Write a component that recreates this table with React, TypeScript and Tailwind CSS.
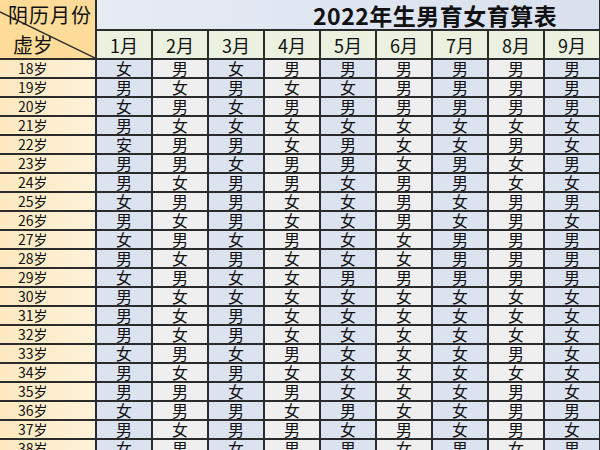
import React from "react";

// 每行：虚岁 + 1~9月
const rows: [number, string][] = [
  [18, "女男女男男男男男男"],
  [19, "男女男女女男男男男"],
  [20, "女男女男男男男男男"],
  [21, "男女女女女女女女女"],
  [22, "安男男女男女女男女"],
  [23, "男男女男男女男女男"],
  [24, "男女男男女男男女女"],
  [25, "女男男女女男女男男"],
  [26, "男女男女女男女男女"],
  [27, "女男女男女女男男男"],
  [28, "男女男女女女男男男"],
  [29, "女男女女男男男男男"],
  [30, "男女女女女女女女女"],
  [31, "男女男女女女女女女"],
  [32, "男女男女女女女女女"],
  [33, "女男女男女女女男女"],
  [34, "男女男女女女女女女"],
  [35, "男男女男女女女男女"],
  [36, "女男男女男女女男男"],
  [37, "男女男男女男女男女"],
  [38, "女男女男男女男女男"],
];

const months = ["1月", "2月", "3月", "4月", "5月", "6月", "7月", "8月", "9月"];

const font = { fontFamily: '"Noto Sans CJK SC", "Noto Sans", sans-serif' };

export default function App() {
  return (
    <div className="w-[600px] h-[450px] overflow-hidden bg-white" style={font}>
      <div className="grid grid-cols-[95px_repeat(9,54px)] grid-rows-[29px_27px] auto-rows-[17px] gap-[2px] bg-[#2b2b2b] w-[600px] text-[#111]">
        {/* 左上角斜线表头 */}
        <div className="relative row-span-2 bg-[#fddc99]">
          <svg className="absolute inset-0" width="95" height="58" viewBox="0 0 95 58">
            <line x1="0" y1="12" x2="95" y2="58" stroke="#2b2b2b" strokeWidth="1.4" />
          </svg>
          <div className="absolute left-[8px] top-[1px] text-[20px] leading-[28px] tracking-[1px]">阴历月份</div>
          <div className="absolute left-[13px] top-[33px] text-[20px] leading-[24px]">虚岁</div>
        </div>

        {/* 标题 */}
        <div className="col-span-9 bg-gradient-to-r from-[#e6ebf4] to-[#d9e1ee] flex items-center pl-[216px]">
          <span className="text-[23px] font-bold leading-[28px] tracking-[0.5px]">2022年生男育女育算表</span>
        </div>

        {/* 月份 */}
        {months.map((m) => (
          <div key={m} className="bg-[#eaf1de] flex items-center justify-center text-[18px] leading-[26px]">
            {m}
          </div>
        ))}

        {/* 数据 */}
        {rows.map(([age, vals]) => (
          <React.Fragment key={age}>
            <div className="bg-gradient-to-r from-[#fde9c0] to-[#fef2d9] flex items-center pl-[18px] text-[14px] leading-[17px]">
              {age}岁
            </div>
            {vals.split("").map((v, i) => (
              <div
                key={i}
                className={
                  (i % 2 === 0 ? "bg-[#dbe3f1]" : "bg-[#efefef]") +
                  " flex items-center justify-center text-[16px] leading-[17px]"
                }
              >
                {v}
              </div>
            ))}
          </React.Fragment>
        ))}
      </div>
    </div>
  );
}
